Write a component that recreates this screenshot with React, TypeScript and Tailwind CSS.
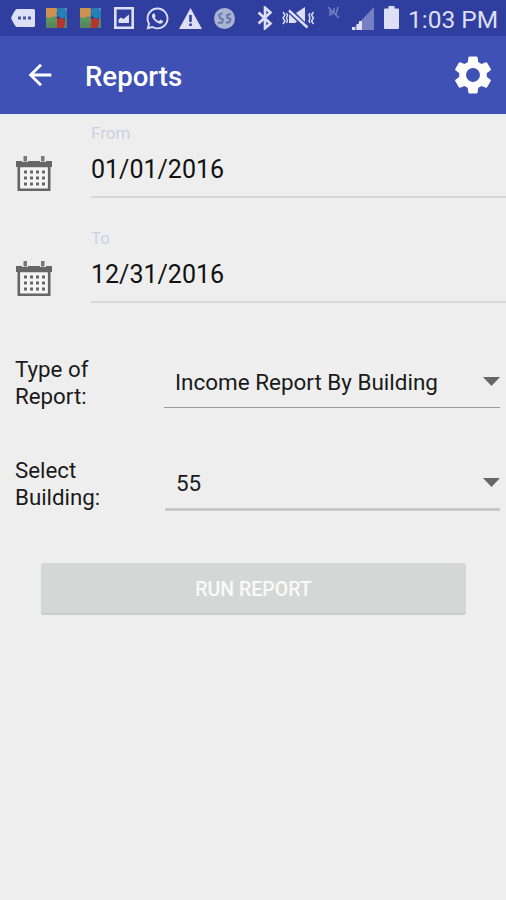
import type { ReactNode } from 'react';
import { FaWhatsapp } from 'react-icons/fa';
import { MdArrowBack, MdSettings } from 'react-icons/md';

const puzzlePieces = (
  <>
    <path d="M0 0h11v9H7l-3 2-4-1z" fill="#cf9150" />
    <path d="M0 9l4 1 4-2 3 2v6H0z" fill="#5c9460" />
    <path d="M0 16l5-2 6 2v4H0z" fill="#57875a" />
    <path d="M12 0h6l3 3v6l-5 2-6-5z" fill="#2480b6" />
    <path d="M18 0h3v3z" fill="#6b8fb0" />
    <path d="M11 11l5-1 3 2v6l-3 2h-5z" fill="#b8352f" />
    <path d="M19 10l2-1v11h-4l2-3z" fill="#4f8a80" />
  </>
);

function StatusBar() {
  return (
    <div className="flex h-9 items-start bg-[#303f9f] text-[#dcdff5]">
      <svg className="mt-[9px] ml-[11px] h-[18px] w-6 shrink-0" viewBox="0 0 24 18">
        <path d="M6 0h16.500q1.500 0 1.500 1.500v15q0 1.500-1.500 1.500H6Q4 18 0 9 4 0 6 0z" fill="currentColor" />
        <path d="M7 7.500h3v3H7zM12 7.500h3v3h-3zM17 7.500h3v3h-3z" fill="#46539f" />
      </svg>
      <svg className="mt-2 ml-[11px] h-5 w-[21px] shrink-0" viewBox="0 0 21 20">
        {puzzlePieces}
      </svg>
      <svg className="mt-2 ml-[13px] h-5 w-[21px] shrink-0" viewBox="0 0 21 20">
        {puzzlePieces}
      </svg>
      <svg className="mt-[7px] ml-[13px] h-[22px] w-5 shrink-0" viewBox="0 0 20 22">
        <path d="M1.300 1.300h17.400v19.400H1.300z" fill="none" stroke="currentColor" strokeWidth="2.600" />
        <path d="M4.500 16v-3.500l2.500-2 2.500 1.500 5.500-4.500V16z" fill="currentColor" />
      </svg>
      <FaWhatsapp className="mt-[6px] ml-[11px] size-[25px] shrink-0" />
      <svg className="mt-2 ml-[9px] h-[21px] w-[23px] shrink-0" viewBox="0 0 23 21">
        <path d="M11.500 0L23 21H0z" fill="currentColor" />
        <path d="M10.200 7h2.600v7h-2.600zM10.200 15.500h2.600V18h-2.600z" fill="#303f9f" />
      </svg>
      <svg className="mt-2 ml-3 size-[21px] shrink-0" viewBox="0 0 21 21">
        <circle cx="10.500" cy="10.500" r="10.500" fill="#a9b4d3" />
        <path
          d="M8.500 5L5 7l1 3 3 1.500-1 3-4 .5M17 6l-4 1 .5 3 3 1-1 3-3.500 1"
          fill="none"
          stroke="#6b76ad"
          strokeWidth="2"
        />
      </svg>
      <svg className="mt-[6px] ml-[22px] h-6 w-4 shrink-0" viewBox="0 0 16 24">
        <path d="M1.500 6.500l12 11L8 22.300V1.700l5.500 4.800-12 11" fill="none" stroke="currentColor" strokeWidth="2.600" />
      </svg>
      <svg className="mt-[7px] ml-[9px] h-[22px] w-[33px] shrink-0" viewBox="0 0 33 22">
        <path d="M7 7l8 7.500-2 1.500H7zM14 6l9-6v15z" fill="currentColor" />
        <path d="M7 3.500l18.500 17" stroke="currentColor" strokeWidth="2.400" />
        <path
          d="M1 5l2 3-2 3 2 3-2 3M4.500 6l1 2-1 3 1 3-1 2M28 6l-1 2 1 3-1 3 1 2M31.500 5l-2 3 2 3-2 3 2 3"
          fill="none"
          stroke="currentColor"
          strokeWidth="1.400"
        />
      </svg>
      <svg className="mt-[6px] ml-[12px] h-[13px] w-[14px] shrink-0 opacity-40" viewBox="0 0 14 13">
        <path d="M1 1l11 11M3 10V4M5 9V5M9 8l2-7M7 6V2" fill="none" stroke="currentColor" strokeWidth="1.500" />
      </svg>
      <svg className="mt-[7px] ml-[11px] h-[23px] w-[22px] shrink-0" viewBox="0 0 22 23">
        <path d="M22 0v23H0z" fill="#7580c2" />
        <path d="M0 20h3v3H0zM4.500 17h2.500v6H4.500zM7 14h3v9H7z" fill="currentColor" />
      </svg>
      <svg className="mt-[6px] ml-[10px] h-[23px] w-[15px] shrink-0" viewBox="0 0 15 23">
        <path d="M4.500 0h6v2.500H14q1 0 1 1V22q0 1-1 1H1q-1 0-1-1V3.500q0-1 1-1h3.500z" fill="currentColor" />
      </svg>
      <span className="ml-[9px] text-[24.500px] leading-[39px] whitespace-nowrap">1:03 PM</span>
    </div>
  );
}

function CalendarIcon() {
  return (
    <svg className="size-9 shrink-0" viewBox="0 0 36 36">
      <path d="M0 5h36v6H0z" fill="#666" />
      <path d="M2.800 10h30.400v23.800H2.800z" fill="#f4f4f4" stroke="#666" strokeWidth="2.600" />
      <path d="M6 0h6v6H6zM24 0h6v6h-6z" fill="#eee" />
      <path d="M7.500 0h3.500v5.500H7.500zM25 0h3.500v5.500H25z" fill="#777" />
      {[14.500, 20.500, 26.500].map((y) =>
        [8, 14, 20, 26].map((x) => <path key={`${x}-${y}`} d={`M${x} ${y}h3v3h-3z`} fill="#666" />)
      )}
    </svg>
  );
}

function DateField({ label, value }: { label: string; value: string }) {
  return (
    <div className="flex h-[105px] pl-4">
      <div className="w-[75px] pt-[42px]">
        <CalendarIcon />
      </div>
      <div className="h-[84px] flex-1 border-b-2 border-[#d8d8d8] pt-[9px]">
        <p className="text-[17px] leading-[21px] text-[#cfcfe4]">{label}</p>
        <p className="mt-[10px] text-[25px] leading-[31px] text-[#111]">{value}</p>
      </div>
    </div>
  );
}

type SelectRowProps = {
  label: ReactNode;
  value: string;
  fieldClass: string;
};

function SelectRow({ label, value, fieldClass }: SelectRowProps) {
  return (
    <div className="flex pr-1.5 pl-[15px]">
      <p className="-mt-px w-[149px] shrink-0 text-[22.300px] leading-[26.500px] text-[#1a1a1a]">{label}</p>
      <div className={`flex flex-1 justify-between ${fieldClass}`}>
        <span className="text-[22.450px] leading-7 whitespace-nowrap text-[#1a1a1a]">{value}</span>
        <svg className="mt-[9px] h-[9px] w-[17px]" viewBox="0 0 17 9">
          <path d="M0 0h17L8.500 9z" fill="#666" />
        </svg>
      </div>
    </div>
  );
}

export default function App() {
  return (
    <div className="h-[900px] w-[506px] overflow-hidden bg-[#eee] font-['Roboto',sans-serif]">
      <StatusBar />
      <header className="flex h-[78px] items-center bg-[#3f51b5] pr-[10px] pl-[23px] text-white">
        <MdArrowBack className="size-[34px]" />
        <h1 className="ml-7 pt-1 text-[27.600px] font-medium">Reports</h1>
        <MdSettings className="ml-auto size-[46px]" />
      </header>

      <DateField label="From" value="01/01/2016" />
      <DateField label="To" value="12/31/2016" />

      <div className="pt-[33px]">
        <SelectRow
          label={
            <>
              Type of
              <br />
              Report:
            </>
          }
          value="Income Report By Building"
          fieldClass="h-[51px] border-b border-[#999] pt-[11px] pl-[11px]"
        />
      </div>
      <div className="pt-[49px]">
        <SelectRow
          label={
            <>
              Select
              <br />
              Building:
            </>
          }
          value="55"
          fieldClass="ml-px h-[53px] border-b-[3px] border-[#c8c8c8] pt-[11px] pl-[11px]"
        />
      </div>

      <button
        type="button"
        disabled
        className="mt-[52px] ml-[41px] block h-[52px] w-[425px] rounded-[3px] border-b-2 border-[#c9cccb] bg-[#d5d7d6] pt-[3px] text-[19.500px] font-medium text-[#fafafa]"
      >
        RUN REPORT
      </button>
    </div>
  );
}
